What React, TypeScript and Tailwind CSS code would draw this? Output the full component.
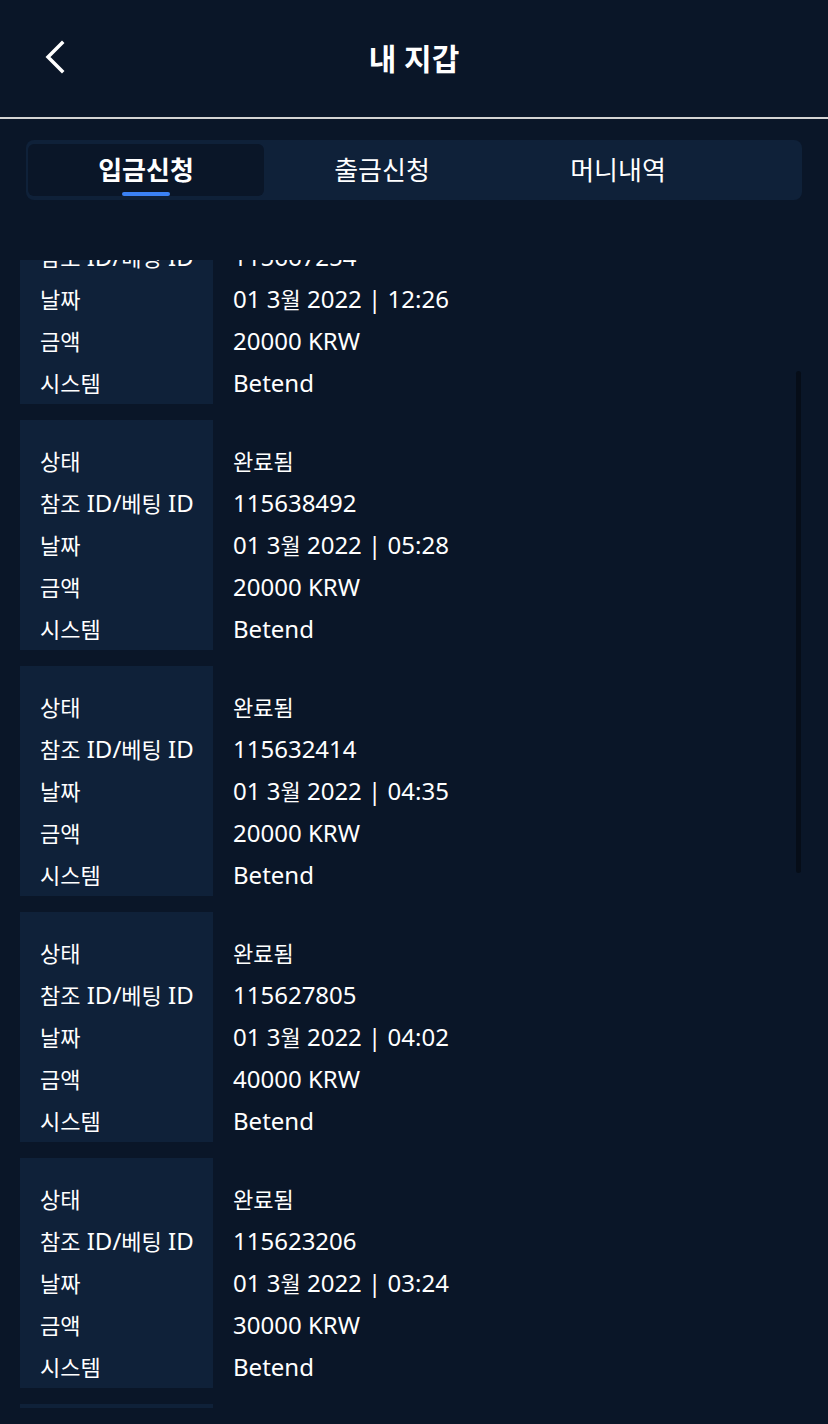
import { useLayoutEffect, useRef } from "react";

type Tx = {
  id: string;
  date: string;
  amount: string;
};

const TXS: Tx[] = [
  { id: "115671093", date: "01 3월 2022 | 13:02", amount: "20000 KRW" },
  { id: "115667254", date: "01 3월 2022 | 12:26", amount: "20000 KRW" },
  { id: "115638492", date: "01 3월 2022 | 05:28", amount: "20000 KRW" },
  { id: "115632414", date: "01 3월 2022 | 04:35", amount: "20000 KRW" },
  { id: "115627805", date: "01 3월 2022 | 04:02", amount: "40000 KRW" },
  { id: "115623206", date: "01 3월 2022 | 03:24", amount: "30000 KRW" },
  { id: "115619870", date: "01 3월 2022 | 02:51", amount: "20000 KRW" },
];

const LABELS = ["상태", "참조 ID/베팅 ID", "날짜", "금액", "시스템"];

const FONT = "font-['Noto_Sans','Noto_Sans_CJK_KR',sans-serif]";

function Mixed({ text }: { text: string }) {
  const parts = text.split(/([가-힣]+)/);
  return (
    <>
      {parts.map((p, i) =>
        /[가-힣]/.test(p) ? (
          <span key={i} className="text-[22px]">
            {p}
          </span>
        ) : (
          p
        ),
      )}
    </>
  );
}

function TxCard({ tx }: { tx: Tx }) {
  const values = ["완료됨", tx.id, tx.date, tx.amount, "Betend"];
  return (
    <div className="flex h-[230px] shrink-0">
      <div className="w-[193px] bg-[#0f2139] pl-5 pt-5">
        {LABELS.map((l) => (
          <div key={l} className="flex h-[42px] items-center whitespace-pre">
            <Mixed text={l} />
          </div>
        ))}
      </div>
      <div className="pl-5 pt-5">
        {values.map((v, i) => (
          <div key={i} className="flex h-[42px] items-center whitespace-pre">
            <Mixed text={v} />
          </div>
        ))}
      </div>
    </div>
  );
}

export default function App() {
  const listRef = useRef<HTMLDivElement>(null);

  useLayoutEffect(() => {
    if (listRef.current) listRef.current.scrollTop = 332;
  }, []);

  const tabs = ["입금신청", "출금신청", "머니내역"];

  return (
    <div className={`flex h-[1424px] flex-col bg-[#0a1628] text-white ${FONT}`}>
      <header className="relative flex h-[117px] shrink-0 items-center justify-center">
        <button type="button" className="absolute left-[40px] top-[34px] p-1">
          <svg width="28" height="38" viewBox="0 0 28 38" fill="none">
            <path d="M18 5 L4 19 L18 33" stroke="white" strokeWidth="3.5" strokeLinecap="square" />
          </svg>
        </button>
        <h1 className="text-[30px] font-bold">내 지갑</h1>
      </header>
      <div className="h-[2px] shrink-0 bg-[#d4d4d4]" />

      <nav className="mx-[26px] mt-[21px] flex h-[60px] shrink-0 rounded-[8px] bg-[#0f2139] px-[2px] py-[4px]">
        {tabs.map((t, i) => (
          <button
            key={t}
            type="button"
            className={[
              "relative flex w-[236px] items-center justify-center rounded-[6px] text-[26px]",
              i === 0 ? "bg-[#0a1628] font-bold" : "",
            ].join(" ")}
          >
            {t}
            {i === 0 && <span className="absolute bottom-0 h-[4px] w-[48px] rounded-full bg-[#3b82f6]" />}
          </button>
        ))}
      </nav>

      <div className="relative mt-[60px] mb-[16px] min-h-0 flex-1">
        <div ref={listRef} className="flex h-full flex-col gap-4 overflow-hidden pl-5 text-[24px]">
          {TXS.map((tx) => (
            <TxCard key={tx.id} tx={tx} />
          ))}
        </div>
        <div className="absolute right-[27px] top-[111px] h-[502px] w-[5px] rounded-full bg-[#060d18]" />
      </div>
    </div>
  );
}
